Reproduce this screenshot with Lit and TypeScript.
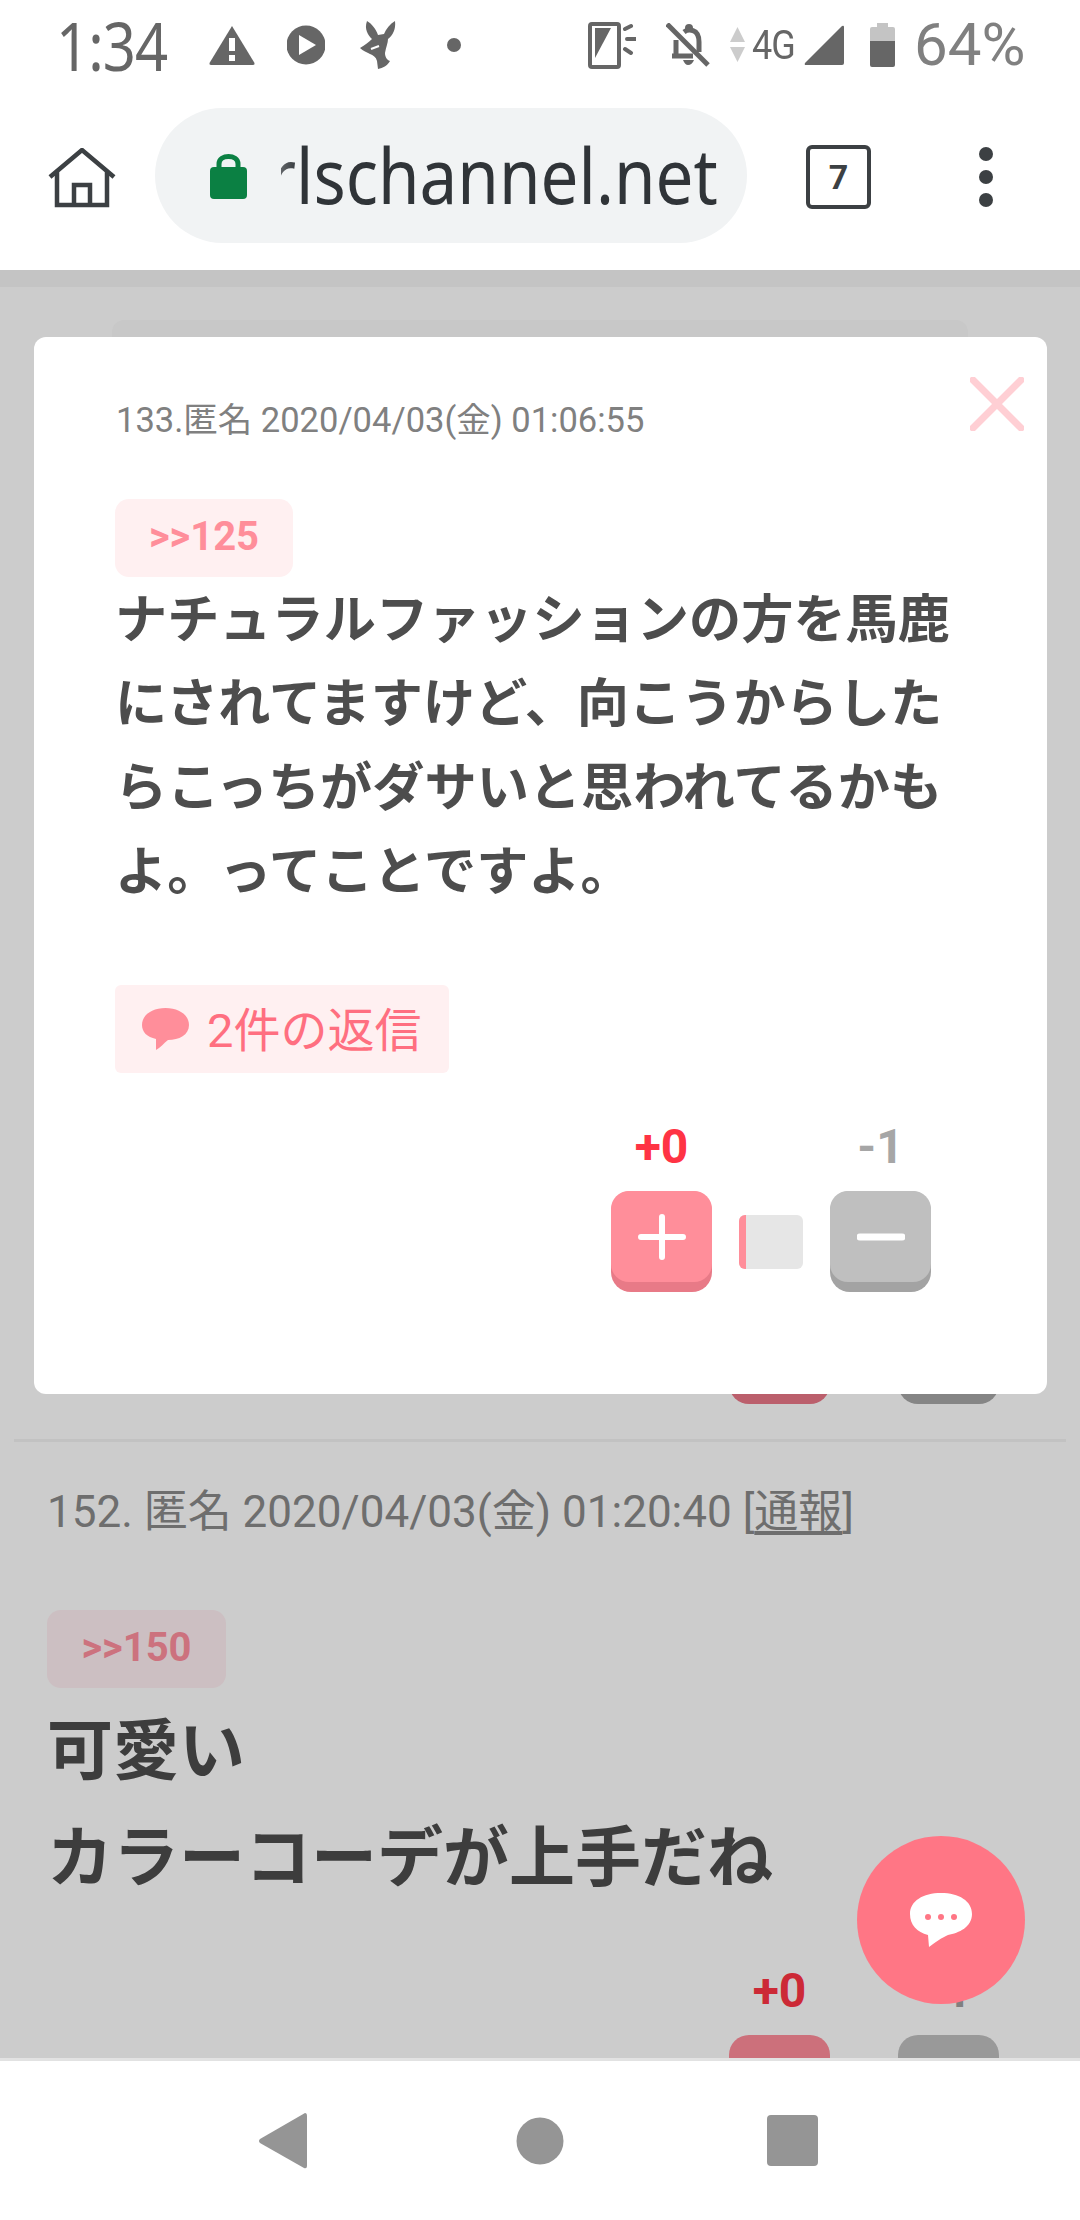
import { LitElement, html, css } from "lit";
import { customElement } from "lit/decorators.js";

@customElement("app-root")
export class AppRoot extends LitElement {
  static styles = css`
    :host { display: block; width: 1080px; height: 2220px; position: relative; overflow: hidden; background: #fff;
      font-family: Roboto, "Noto Sans CJK JP", sans-serif; }
    svg { display: block; flex: none; }
    .status { height: 90px; display: flex; align-items: center; padding-left: 56px; color: #666; box-sizing: border-box; }
    .time { width: 114px; white-space: nowrap; letter-spacing: -1px; transform: scaleY(1.17); line-height: 84px; font-family: "Noto Sans", Roboto, sans-serif; font-size: 58px; }
    .warn { margin-left: 39px; } .play { margin-left: 32px; } .deer { margin-left: 35px; } .dot { margin-left: 50px; }
    .rot { margin-left: 127px; } .bell { margin-left: 30px; } .arrows { margin-left: 20px; }
    .g4 { margin-left: 7px; width: 43px; font-size: 36px; line-height: 90px; white-space: nowrap; transform: scaleY(1.15); letter-spacing: -1px; }
    .sig { margin-left: 9px; } .bat { margin-left: 26px; }
    .pct { margin-left: 19px; font-size: 60px; color: #808080; line-height: 90px; white-space: nowrap; }
    .toolbar { height: 180px; display: flex; align-items: center; box-sizing: border-box; padding: 0 0 0 48px; }
    .home { margin-top: -5px; }
    .pill { margin-left: 39px; width: 592px; height: 135px; margin-top: -9px; border-radius: 68px; background: #f1f3f4; display: flex; align-items: center; padding-left: 55px; box-sizing: border-box; }
    .url { margin-left: 34px; width: 437px; overflow: hidden; direction: rtl; white-space: nowrap; font-family: "Noto Sans", sans-serif; font-size: 76px; line-height: 100px; color: #303438; text-align: right; margin-top: -2px;
      -webkit-mask-image: linear-gradient(to right, rgba(0,0,0,.75), #000 18px); mask-image: linear-gradient(to right, rgba(0,0,0,.75), #000 18px); }
    .url span { display: inline-block; unicode-bidi: bidi-override; direction: ltr; transform: scaleX(.886); transform-origin: right center; }
    .tab { margin-left: 59px; margin-top: -6px; width: 65px; height: 64px; box-sizing: border-box; border: 4px solid #3c4043; border-radius: 6px; display: flex; align-items: center; justify-content: center; font: 700 34px/1 Roboto, sans-serif; color: #3c4043; }
    .more { margin-left: 108px; margin-top: -7px; }
    .page { height: 1788px; background: #ccc; overflow: hidden; }
    .band { height: 17px; background: #c4c4c4; }
    .ghost { margin: 33px 112px 0; height: 100px; border-radius: 12px; background: #c8c8c8; }
    .prev { margin-top: 883px; padding-left: 729px; display: flex; gap: 68px; }
    .pb { width: 101px; height: 101px; border-radius: 20px; }
    .pb.r { background: #bb5f6c; } .pb.g { background: #858585; }
    .rule { margin: 35px 14px 0; height: 3px; background: #c2c2c2; }
    .post { padding-left: 47px; }
    .pmeta { margin-top: 42px; font-size: 44px; line-height: 56px; color: #6e6e6e; white-space: nowrap; }
    .pmeta u { text-underline-offset: 4px; }
    .ref { margin-top: 70px; width: 179px; height: 78px; border-radius: 14px; background: #ccbfc2; color: #cc727e; font-weight: 700; font-size: 40px; line-height: 76px; display: flex; align-items: flex-start; justify-content: center; }
    .ptext { margin-top: 4px; font: 700 66px/107px "Noto Sans CJK JP", sans-serif; color: #3d3d3d; white-space: nowrap; }
    .pvotes { margin-top: 60px; padding-left: 682px; display: grid; grid-template-columns: 101px 68px 101px; row-gap: 19px; }
    .pn { font-weight: 700; font-size: 48px; line-height: 50px; text-align: center; color: #cc2936; }
    .pn.m { color: #808080; }
    .pfill { height: 101px; border-radius: 20px; background: #cc707b; grid-column: 1; }
    .pfill.g { background: #999; grid-column: 3; }
    .nav { height: 162px; box-sizing: border-box; border-top: 3px solid #e2e2e2; display: flex; align-items: center; padding-left: 259px; margin-top: 0; }
    .nav .c { margin-left: 209px; } .nav .s { margin-left: 203px; }
    .modal { position: absolute; left: 34px; top: 337px; width: 1013px; height: 1057px; box-sizing: border-box; background: #fff; border-radius: 12px; padding: 59px 116px 0 81px; }
    .close { position: absolute; left: 936px; top: 40px; }
    .meta { font-size: 34.500px; line-height: 48px; color: #808080; white-space: nowrap; padding-left: 1px; }
    .badge { margin-top: 55px; width: 178px; height: 78px; border-radius: 14px; background: #fff0f1; color: #ff8e9a; font-weight: 700; font-size: 40px; line-height: 76px; display: flex; align-items: flex-start; justify-content: center; }
    .body { margin-top: -4px; font: 700 52.200px/84px "Noto Sans CJK JP", sans-serif; color: #4d4d4d; white-space: nowrap; }
    .chip { margin-top: 76px; width: 334px; height: 88px; border-radius: 6px; background: #fff0f1; color: #ff6f80; font-size: 47px; display: flex; align-items: center; padding-left: 27px; box-sizing: border-box; gap: 18px; white-space: nowrap; }
    .chip span { margin-top: -5px; }
    .votes { margin-top: 49px; display: grid; grid-template-columns: 101px 118px 101px; justify-content: end; row-gap: 19px; align-items: center; }
    .n { font-weight: 700; font-size: 48px; line-height: 50px; text-align: center; color: #ff3344; }
    .n.m { color: #a6a6a6; grid-column: 3; }
    .btn { height: 101px; border-radius: 20px; background: #e87a87; }
    .btn.g { background: #a3a3a3; }
    .face { height: 91px; border-radius: 18px; background: #ff8e9a; display: flex; align-items: center; justify-content: center; }
    .g .face { background: #bfbfbf; }
    .bar { justify-self: center; width: 64px; height: 54px; border-radius: 6px; overflow: hidden; background: #e6e6e6; display: flex; }
    .bar i { display: block; width: 7px; background: #ff8e9a; }
    .fab { position: absolute; left: 857px; top: 1836px; width: 168px; height: 168px; border-radius: 50%; background: #ff7685; display: flex; align-items: center; justify-content: center; }
  `;

  render() {
    return html`
      <div class="status">
        <div class="time">1:34</div>
        <svg class="warn" width="46" height="40" viewBox="0 0 46 40"><path d="M23 1 L45.500 38 Q46 40 44 40 L2 40 Q0 40 .5 38Z" fill="#666"/><rect x="20" y="13" width="6" height="13" fill="#fff"/><rect x="20" y="30" width="6" height="6" fill="#fff"/></svg>
        <svg class="play" width="38" height="44" viewBox="0 0 38 44"><circle cx="19" cy="22" r="19.500" fill="#666"/><path d="M12 12 L29 22 L12 32Z" fill="#fff"/></svg>
        <svg class="deer" width="37" height="48" viewBox="0 0 37 48"><path d="M7 0 C4 8 8 14 12 18 C9 21 5 24 0 27 C3 30 7 31 10 33 C13 34 16 36 17 40 L18 48 C23 47 27 45 30 40 C27 39 25 36 25 32 C26 26 28 22 28 18 C33 14 36 8 35 0 C30 3 26 8 24 13 L18 14 C16 8 12 3 7 0Z" fill="#666"/><path d="M11 28 L19 25" stroke="#fff" stroke-width="2"/></svg>
        <svg class="dot" width="14" height="14" viewBox="0 0 14 14"><circle cx="7" cy="7" r="7" fill="#666"/></svg>
        <svg class="rot" width="48" height="47" viewBox="0 0 48 47"><rect x="2" y="2" width="29" height="43" rx="2" fill="none" stroke="#666" stroke-width="4"/><path d="M7 6 H23 L7 36Z" fill="#666"/><path d="M37 7 L43 4 M39 17 H48 M37 27 L43 31" stroke="#666" stroke-width="4" stroke-linecap="round"/></svg>
        <svg class="bell" width="44" height="44" viewBox="0 0 44 44"><path d="M1 1 L42 42" stroke="#666" stroke-width="5"/><path d="M6 33 H27 M10 33 V17 M18 9 C22 6 33 5 33 19 V29" fill="none" stroke="#666" stroke-width="5"/><circle cx="23" cy="5" r="4" fill="#666"/><path d="M17 37 H28 Q26 42 22 42 Q19 42 17 37Z" fill="#666"/></svg>
        <svg class="arrows" width="15" height="36" viewBox="0 0 15 36"><path d="M7.500 0 L15 15 H0Z M7.500 35 L15 20 H0Z" fill="#ccc"/></svg>
        <div class="g4">4G</div>
        <svg class="sig" width="40" height="40" viewBox="0 0 40 40"><path d="M40 2 Q40 0 38 1 L1 38 Q0 40 2 40 H38 Q40 40 40 38Z" fill="#666"/></svg>
        <svg class="bat" width="25" height="44" viewBox="0 0 25 44"><path d="M7 0 H18 V4 H23 Q25 4 25 6 V18 H0 V6 Q0 4 2 4 H7Z" fill="#c4c4c4"/><path d="M0 18 H25 V42 Q25 44 23 44 H2 Q0 44 0 42Z" fill="#666"/></svg>
        <div class="pct">64%</div>
      </div>
      <div class="toolbar">
        <svg class="home" width="68" height="60" viewBox="0 0 68 60"><path d="M2 29 L34 2 L66 29 M9 23 V57 H59 V23 M26 57 V37 H42 V57" fill="none" stroke="#3c4043" stroke-width="4.500"/></svg>
        <div class="pill">
          <svg width="37" height="47" viewBox="0 0 37 47"><path d="M9 16 V12 C9 2 28 2 28 12 V16" fill="none" stroke="#0b8043" stroke-width="5"/><rect x="0" y="15" width="37" height="32" rx="4" fill="#0b8043"/></svg>
          <div class="url"><span>girlschannel.net</span></div>
        </div>
        <div class="tab">7</div>
        <svg class="more" width="14" height="60" viewBox="0 0 14 60"><circle cx="7" cy="7" r="7" fill="#3c4043"/><circle cx="7" cy="30" r="7" fill="#3c4043"/><circle cx="7" cy="53" r="7" fill="#3c4043"/></svg>
      </div>
      <div class="page">
        <div class="band"></div>
        <div class="ghost"></div>
        <div class="prev"><div class="pb r"></div><div class="pb g"></div></div>
        <div class="rule"></div>
        <div class="post">
          <div class="pmeta">152. 匿名 2020/04/03(金) 01:20:40 [<u>通報</u>]</div>
          <div class="ref">&gt;&gt;150</div>
          <div class="ptext">可愛い<br />カラーコーデが上手だね</div>
          <div class="pvotes">
            <div class="pn">+0</div><div></div><div class="pn m">-1</div>
            <div class="pfill"></div><div></div><div class="pfill g"></div>
          </div>
        </div>
      </div>
      <div class="nav">
        <svg width="48" height="56" viewBox="0 0 48 56"><path d="M46 0 Q48 0 48 3 V53 Q48 56 45 55 L1 30 Q-1 28 1 26Z" fill="#959595"/></svg>
        <svg class="c" width="48" height="48" viewBox="0 0 48 48"><circle cx="24" cy="24" r="23.500" fill="#959595"/></svg>
        <svg class="s" width="51" height="51" viewBox="0 0 51 51"><rect width="51" height="51" rx="4" fill="#959595"/></svg>
      </div>
      <div class="modal">
        <svg class="close" width="54" height="54" viewBox="0 0 54 54"><path d="M3 3 L51 51 M51 3 L3 51" stroke="#ffcfd4" stroke-width="7" stroke-linecap="round"/></svg>
        <div class="meta">133.匿名 2020/04/03(金) 01:06:55</div>
        <div class="badge">&gt;&gt;125</div>
        <div class="body">ナチュラルファッションの方を馬鹿<br />にされてますけど、向こうからした<br />らこっちがダサいと思われてるかも<br />よ。ってことですよ。</div>
        <div class="chip">
          <svg width="47" height="42" viewBox="0 0 47 42"><path d="M23.500 0 C37 0 47 7 47 17 C47 27 37 32 26 32 C22 35 18 40 14 42 L14 31 C5 29 0 24 0 17 C0 7 10 0 23.500 0Z" fill="#ff8e9a"/></svg>
          <span>2件の返信</span>
        </div>
        <div class="votes">
          <div class="n">+0</div><div></div><div class="n m">-1</div>
          <div class="btn"><div class="face"><svg width="48" height="46" viewBox="0 0 48 46"><path d="M3 23 H45 M24 3 V43" stroke="#fff" stroke-width="6" stroke-linecap="round"/></svg></div></div>
          <div class="bar"><i></i></div>
          <div class="btn g"><div class="face"><svg width="48" height="8" viewBox="0 0 48 8"><path d="M3 4 H45" stroke="#fff" stroke-width="7" stroke-linecap="round"/></svg></div></div>
        </div>
      </div>
      <div class="fab">
        <svg width="62" height="54" viewBox="0 0 62 54"><path d="M31 0 C49 0 62 8 62 21 C62 34 49 40 38 42 C33 44 24 50 19 54 L18 42 C7 39 0 32 0 21 C0 8 13 0 31 0Z" fill="#fff"/><circle cx="18" cy="24" r="3" fill="#ff7685"/><circle cx="31" cy="24" r="3" fill="#ff7685"/><circle cx="44" cy="24" r="3" fill="#ff7685"/></svg>
      </div>
    `;
  }
}
